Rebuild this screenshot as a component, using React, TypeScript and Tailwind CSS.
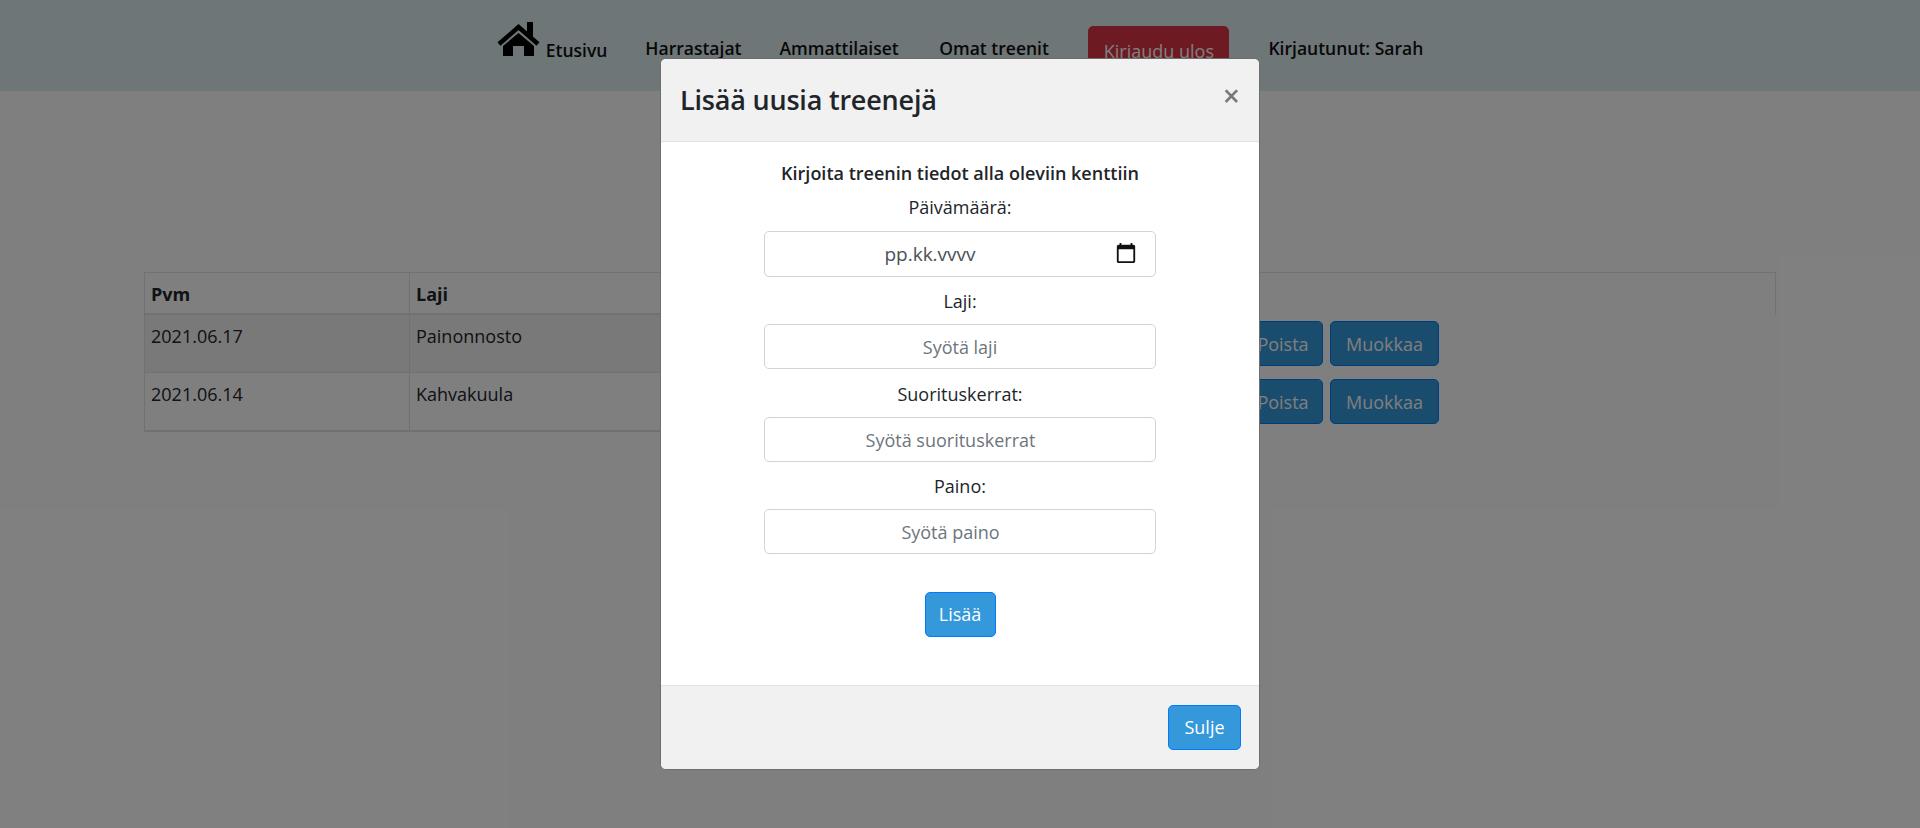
const navLinks = [
  { label: 'Harrastajat', gap: 'mr-[38px]' },
  { label: 'Ammattilaiset', gap: 'mr-[40.5px]' },
  { label: 'Omat treenit', gap: 'mr-[39.5px]' },
];

const rows = [
  { date: '2021.06.17', sport: 'Painonnosto', striped: true },
  { date: '2021.06.14', sport: 'Kahvakuula', striped: false },
];

const fields = [
  { label: 'Laji:', placeholder: 'Syötä laji', gap: 'mt-[12px]', pad: '' },
  { label: 'Suorituskerrat:', placeholder: 'Syötä suorituskerrat', gap: 'mt-[13px]', pad: 'pr-[19px]' },
  { label: 'Paino:', placeholder: 'Syötä paino', gap: 'mt-[12px]', pad: 'pr-[19px]' },
];

function HouseIcon() {
  return (
    <svg viewBox="0 0 44 36" className="w-[44px] h-[36px] mb-[8px] shrink-0" fill="#000">
      <path d="M2 23 L21.500 6 L41 23" fill="none" stroke="#000" strokeWidth="4.500" />
      <path d="M30 1 H36 V17 L30 12 Z" />
      <path d="M21.500 12 L37 25 V35 H27 V25 H16 V35 H6 V25 Z" />
    </svg>
  );
}

function Navbar() {
  return (
    <nav className="h-[91px] bg-[#deecf0] flex justify-center items-start pt-[26px] text-[17.5px] font-semibold text-[#111]">
      <a className="flex items-end h-[45px] -mt-[6px] mr-[38px]">
        <HouseIcon />
        <span className="ml-[5px] leading-[24px] mb-[3px]">Etusivu</span>
      </a>
      {navLinks.map((link) => (
        <a key={link.label} className={`${link.gap} mt-[10px] leading-[24px]`}>{link.label}</a>
      ))}
      <button className="h-[45px] w-[141px] bg-[#dc3545] border border-[#dc3545] rounded-[5px] text-white font-normal text-[18px] pt-[5px] mr-[39px] leading-[24px]">
        Kirjaudu ulos
      </button>
      <span className="mt-[10px] leading-[24px]">Kirjautunut: Sarah</span>
    </nav>
  );
}

function WorkoutTable() {
  return (
    <div className="mx-[144px] mt-[181px] text-[18px] leading-[24px] text-[#212529]">
      <div className="h-[43px] border-t border-x border-[#dee2e6] font-bold">
        <div className="flex w-[1099px] h-[42px] border-b-2 border-[#dee2e6]">
          <div className="w-[265px] border-r border-[#dee2e6] pl-[6px] pt-[9px]">Pvm</div>
          <div className="pl-[6px] pt-[9px]">Laji</div>
        </div>
      </div>
      {rows.map((row) => (
        <div key={row.date} className={`flex ${row.striped ? 'h-[58px]' : 'h-[59px]'}`}>
          <div className={`flex w-[1100px] border-l border-b border-[#dee2e6] ${row.striped ? 'bg-[#f2f2f2]' : 'border-b-2'}`}>
            <div className="w-[265px] border-r border-[#dee2e6] pl-[6px] pt-[9px]">{row.date}</div>
            <div className="pl-[6px] pt-[9px]">{row.sport}</div>
          </div>
          <div className="flex gap-[7px] ml-[-1px] mt-[6px]">
            <button className="h-[45px] w-[80px] bg-[#3498db] border border-[#007bff] rounded-[5px] text-white">Poista</button>
            <button className="h-[45px] w-[109px] bg-[#3498db] border border-[#007bff] rounded-[5px] text-white">Muokkaa</button>
          </div>
        </div>
      ))}
    </div>
  );
}

function WorkoutModal() {
  return (
    <div className="absolute inset-0 bg-black/50 pt-[58px]">
      <div className="w-[600px] h-[712px] mx-auto bg-white border border-[#6e6e6e] rounded-[6px] overflow-hidden flex flex-col text-[#212529]">
        <div className="h-[83px] shrink-0 bg-[#f1f1f1] border-b border-[#dee2e6] flex justify-between px-[19px]">
          <h5 className="text-[27px] font-semibold tracking-[-0.2px] leading-[40px] mt-[21px]">Lisää uusia treenejä</h5>
          <span className="text-[30px] font-semibold text-black/50 leading-[32px] mt-[21px]">×</span>
        </div>
        <div className="flex-1 flex flex-col items-center text-[18px]">
          <p className="font-semibold leading-[24px] mt-[19px]">Kirjoita treenin tiedot alla oleviin kenttiin</p>
          <label className="leading-[24px] mt-[10px]">Päivämäärä:</label>
          <div className="relative w-[392px] h-[46px] mt-[12px] border border-[#ced4da] rounded-[5px] text-[#495057] text-[19px] text-center leading-[44px] pr-[60px]">
            pp.kk.vvvv
            <svg viewBox="0 0 24 24" className="absolute right-[18px] top-[10px] w-[22px] h-[22px]" fill="#111">
              <path d="M20 3h-1V1h-2v2H7V1H5v2H4c-1.100 0-2 .9-2 2v16c0 1.100.9 2 2 2h16c1.100 0 2-.9 2-2V5c0-1.100-.9-2-2-2zm0 18H4V8h16v13z" />
            </svg>
          </div>
          {fields.map((field) => (
            <div key={field.label} className="flex flex-col items-center">
              <label className={`leading-[24px] ${field.gap}`}>{field.label}</label>
              <input
                placeholder={field.placeholder}
                className={`w-[392px] h-[45px] mt-[11px] border border-[#ced4da] rounded-[5px] text-center placeholder:text-[#6c757d] outline-none ${field.pad}`}
              />
            </div>
          ))}
          <button className="h-[45px] w-[71px] mt-[38px] bg-[#3498db] border border-[#007bff] rounded-[5px] text-white">Lisää</button>
        </div>
        <div className="h-[84px] shrink-0 bg-[#f1f1f1] border-t border-[#dee2e6] flex justify-end items-start pt-[19px] pr-[18px]">
          <button className="h-[45px] w-[73px] bg-[#3498db] border border-[#007bff] rounded-[5px] text-white text-[18px]">Sulje</button>
        </div>
      </div>
    </div>
  );
}

export default function App() {
  return (
    <div className="relative h-[828px] overflow-hidden bg-white font-['Open_Sans','Noto_Sans',sans-serif]">
      <Navbar />
      <WorkoutTable />
      <WorkoutModal />
    </div>
  );
}
